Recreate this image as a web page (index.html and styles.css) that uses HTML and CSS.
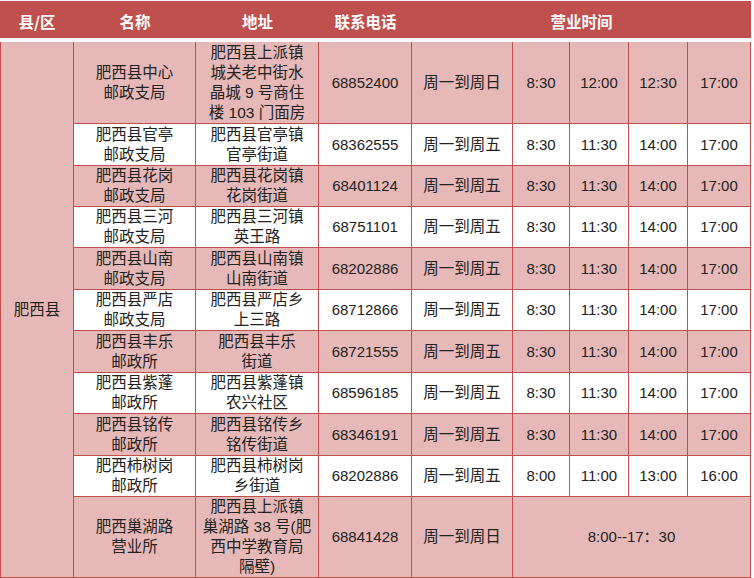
FILE: index.html
```html
<!DOCTYPE html>
<html lang="zh-CN">
<head>
<meta charset="utf-8">
<title>肥西县邮政网点营业时间</title>
<link rel="stylesheet" href="styles.css">
</head>
<body>
<table class="sheet">
  <colgroup>
    <col class="c-county">
    <col class="c-name">
    <col class="c-addr">
    <col class="c-tel">
    <col class="c-days">
    <col class="c-t1">
    <col class="c-t2">
    <col class="c-t3">
    <col class="c-t4">
  </colgroup>
  <thead>
    <tr class="head">
      <th>县/区</th>
      <th>名称</th>
      <th>地址</th>
      <th>联系电话</th>
      <th colspan="5">营业时间</th>
    </tr>
  </thead>
  <tbody>
    <tr class="pink r-tall">
      <td class="county" rowspan="11">肥西县</td>
      <td>肥西县中心<br>邮政支局</td>
      <td>肥西县上派镇<br>城关老中街水<br>晶城 9 号商住<br>楼 103 门面房</td>
      <td class="num">68852400</td>
      <td>周一到周日</td>
      <td class="num">8:30</td><td class="num">12:00</td><td class="num">12:30</td><td class="num">17:00</td>
    </tr>
    <tr class="white r42">
      <td>肥西县官亭<br>邮政支局</td>
      <td>肥西县官亭镇<br>官亭街道</td>
      <td class="num">68362555</td>
      <td>周一到周五</td>
      <td class="num">8:30</td><td class="num">11:30</td><td class="num">14:00</td><td class="num">17:00</td>
    </tr>
    <tr class="pink r41">
      <td>肥西县花岗<br>邮政支局</td>
      <td>肥西县花岗镇<br>花岗街道</td>
      <td class="num">68401124</td>
      <td>周一到周五</td>
      <td class="num">8:30</td><td class="num">11:30</td><td class="num">14:00</td><td class="num">17:00</td>
    </tr>
    <tr class="white r41">
      <td>肥西县三河<br>邮政支局</td>
      <td>肥西县三河镇<br>英王路</td>
      <td class="num">68751101</td>
      <td>周一到周五</td>
      <td class="num">8:30</td><td class="num">11:30</td><td class="num">14:00</td><td class="num">17:00</td>
    </tr>
    <tr class="pink r42">
      <td>肥西县山南<br>邮政支局</td>
      <td>肥西县山南镇<br>山南街道</td>
      <td class="num">68202886</td>
      <td>周一到周五</td>
      <td class="num">8:30</td><td class="num">11:30</td><td class="num">14:00</td><td class="num">17:00</td>
    </tr>
    <tr class="white r41">
      <td>肥西县严店<br>邮政支局</td>
      <td>肥西县严店乡<br>上三路</td>
      <td class="num">68712866</td>
      <td>周一到周五</td>
      <td class="num">8:30</td><td class="num">11:30</td><td class="num">14:00</td><td class="num">17:00</td>
    </tr>
    <tr class="pink r42">
      <td>肥西县丰乐<br>邮政所</td>
      <td>肥西县丰乐<br>街道</td>
      <td class="num">68721555</td>
      <td>周一到周五</td>
      <td class="num">8:30</td><td class="num">11:30</td><td class="num">14:00</td><td class="num">17:00</td>
    </tr>
    <tr class="white r41">
      <td>肥西县紫蓬<br>邮政所</td>
      <td>肥西县紫蓬镇<br>农兴社区</td>
      <td class="num">68596185</td>
      <td>周一到周五</td>
      <td class="num">8:30</td><td class="num">11:30</td><td class="num">14:00</td><td class="num">17:00</td>
    </tr>
    <tr class="pink r42">
      <td>肥西县铭传<br>邮政所</td>
      <td>肥西县铭传乡<br>铭传街道</td>
      <td class="num">68346191</td>
      <td>周一到周五</td>
      <td class="num">8:30</td><td class="num">11:30</td><td class="num">14:00</td><td class="num">17:00</td>
    </tr>
    <tr class="white r41">
      <td>肥西柿树岗<br>邮政所</td>
      <td>肥西县柿树岗<br>乡街道</td>
      <td class="num">68202886</td>
      <td>周一到周五</td>
      <td class="num">8:00</td><td class="num">11:00</td><td class="num">13:00</td><td class="num">16:00</td>
    </tr>
    <tr class="pink r-last">
      <td>肥西巢湖路<br>营业所</td>
      <td>肥西县上派镇<br>巢湖路 38 号(肥<br>西中学教育局<br>隔壁)</td>
      <td class="num">68841428</td>
      <td>周一到周日</td>
      <td class="num" colspan="4">8:00--17：30</td>
    </tr>
  </tbody>
</table>
</body>
</html>
```

FILE: styles.css
```css
html, body {
  margin: 0;
  padding: 0;
  background: #ffffff;
}

body {
  padding-top: 1px;
  font-family: "Liberation Sans", "Noto Sans CJK SC", sans-serif;
  font-size: 15.5px;
  color: #222222;
}

.sheet {
  width: 751px;
  table-layout: fixed;
  border-collapse: separate;
  border-spacing: 0;
}

.c-county { width: 74px; }
.c-name   { width: 122px; }
.c-addr   { width: 123px; }
.c-tel    { width: 93px; }
.c-days   { width: 101px; }
.c-t1     { width: 57px; }
.c-t2     { width: 59px; }
.c-t3     { width: 59px; }
.c-t4     { width: 63px; }

.head {
  height: 41px;
}

.head th {
  background: #c0504d;
  color: #ffffff;
  font-family: "Noto Sans CJK SC", sans-serif;
  font-weight: 700;
  font-size: 15.5px;
  padding: 3px 0 0 0;
  border-bottom: 4px solid #ffffff;
  text-align: center;
  vertical-align: middle;
}

td {
  padding: 0;
  text-align: center;
  vertical-align: middle;
  line-height: 20px;
  border-right: 1px solid #c0504d;
  border-bottom: 1px solid #c0504d;
  white-space: nowrap;
}

td.num {
  font-size: 15px;
}

.county {
  border-left: 1px solid #c0504d;
  background: #e6b8b7;
}

.pink td { background: #e6b8b7; }
.white td { background: #ffffff; }
.white td.county { background: #e6b8b7; }

.r-tall { height: 82px; }
.r42 { height: 42px; }
.r41 { height: 41px; }
.r-last { height: 80px; }
```
